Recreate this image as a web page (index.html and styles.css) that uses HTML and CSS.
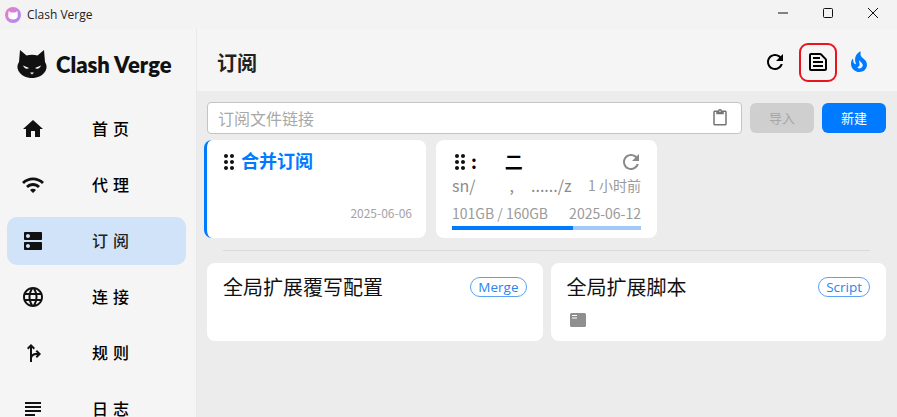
FILE: index.html
```html
<!DOCTYPE html>
<html lang="zh-CN">
<head>
    <meta charset="UTF-8">
    <title>Clash Verge</title>
    <link rel="stylesheet" href="styles.css">
</head>
<body>
<div class="titlebar">
    <svg class="app-icon" viewBox="0 0 16 16">
        <defs>
            <linearGradient id="appgrad" x1="0" y1="0" x2="1" y2="1">
                <stop offset="0" stop-color="#f07cc0"/>
                <stop offset="1" stop-color="#a78bff"/>
            </linearGradient>
        </defs>
        <circle cx="8" cy="8" r="8" fill="url(#appgrad)"/>
        <path d="M3.6 4l2.2 1.5h4.4L12.4 4l.4 5c0 2.200-2.200 3.600-4.800 3.600S3.200 11.200 3.200 9z" fill="#fff"/>
    </svg>
    <span class="app-name">Clash Verge</span>
    <div class="win-btns">
        <svg viewBox="0 0 10 10"><path d="M0 5h10"/></svg>
        <svg viewBox="0 0 10 10"><rect x=".5" y=".5" width="9" height="9" rx="1"/></svg>
        <svg viewBox="0 0 10 10"><path d="M0 0l10 10M10 0L0 10"/></svg>
    </div>
</div>
<div class="app">
    <div class="sidebar">
        <div class="logo">
            <svg class="cat" viewBox="0 0 30 28">
                <path d="M3 0l6.500 5.500c3.500-1 7.500-1 11 0L27 0l1 12c2 3 2 6 .5 9-2.500 4.500-8 7-13.500 7S4 25.500 1.500 21C0 18 0 15 2 12z" fill="#111"/>
                <path d="M6 15.500l6 2.500c-2 1.500-5 .5-6-2.500zM24 15.500L18 18c2 1.500 5 .5 6-2.500z" fill="#fff"/>
                <path d="M13 22.500h4L15 24.500z" fill="#fff"/>
            </svg>
            <span class="logo-text">Clash Verge</span>
        </div>
        <ul class="nav">
            <li class="nav-item">
                <svg viewBox="0 0 24 24"><path d="M10 20v-6h4v6h5v-8h3L12 3 2 12h3v8z"/></svg>
                <span>首页</span>
            </li>
            <li class="nav-item">
                <svg viewBox="0 0 24 24"><path d="M1 9l2 2c4.970-4.970 13.030-4.970 18 0l2-2C16.930 2.930 7.080 2.930 1 9zm8 8l3 3 3-3c-1.650-1.660-4.340-1.660-6 0zm-4-4l2 2c2.760-2.760 7.240-2.760 10 0l2-2C15.140 9.140 8.870 9.140 5 13z"/></svg>
                <span>代理</span>
            </li>
            <li class="nav-item active">
                <svg viewBox="0 0 24 24"><path d="M20 13H4c-.55 0-1 .45-1 1v6c0 .55.45 1 1 1h16c.55 0 1-.45 1-1v-6c0-.55-.45-1-1-1zM7 19c-1.100 0-2-.9-2-2s.9-2 2-2 2 .9 2 2-.9 2-2 2zM20 3H4c-.55 0-1 .45-1 1v6c0 .55.45 1 1 1h16c.55 0 1-.45 1-1V4c0-.55-.45-1-1-1zM7 9c-1.100 0-2-.9-2-2s.9-2 2-2 2 .9 2 2-.9 2-2 2z"/></svg>
                <span>订阅</span>
            </li>
            <li class="nav-item">
                <svg viewBox="0 0 24 24"><path d="M11.990 2C6.470 2 2 6.480 2 12s4.470 10 9.990 10C17.520 22 22 17.520 22 12S17.520 2 11.990 2zm6.930 6h-2.950c-.32-1.250-.78-2.450-1.380-3.560 1.840.63 3.370 1.910 4.330 3.560zM12 4.040c.83 1.200 1.480 2.530 1.910 3.960h-3.820c.43-1.430 1.080-2.760 1.910-3.960zM4.260 14C4.100 13.360 4 12.690 4 12s.1-1.360.26-2h3.380c-.08.66-.14 1.320-.14 2s.06 1.340.14 2H4.260zm.82 2h2.950c.32 1.250.78 2.450 1.380 3.560-1.840-.63-3.370-1.900-4.330-3.560zm2.950-8H5.080c.96-1.660 2.490-2.930 4.330-3.560C8.810 5.550 8.350 6.750 8.030 8zM12 19.960c-.83-1.200-1.480-2.530-1.910-3.960h3.820c-.43 1.430-1.080 2.760-1.910 3.960zM14.340 14H9.660c-.09-.66-.16-1.320-.16-2s.07-1.350.16-2h4.680c.09.65.16 1.320.16 2s-.07 1.340-.16 2zm.25 5.560c.6-1.110 1.060-2.310 1.380-3.560h2.950c-.96 1.650-2.490 2.930-4.330 3.560zM16.360 14c.08-.66.14-1.320.14-2s-.06-1.340-.14-2h3.380c.16.64.26 1.310.26 2s-.1 1.360-.26 2h-3.380z"/></svg>
                <span>连接</span>
            </li>
            <li class="nav-item">
                <svg viewBox="0 0 24 24"><path d="M14.590 15.590 16 17l4-4-4-4-1.410 1.410L16.170 12c-1.510-.33-3.730.08-5.170 1.360V6.830l1.590 1.590L14 7l-4-4-4 4 1.410 1.410L9 6.830V21h2v-4c.73-2.580 3.070-3.470 5.170-3l-1.580 1.590z"/></svg>
                <span>规则</span>
            </li>
            <li class="nav-item">
                <svg viewBox="0 0 24 24"><path d="M14 17H4v2h10v-2zm6-8H4v2h16V9zM4 15h16v-2H4v2zM4 5v2h16V5H4z"/></svg>
                <span>日志</span>
            </li>
        </ul>
    </div>
    <div class="main">
        <div class="header">
            <h1 class="page-title">订阅</h1>
            <div class="header-btns">
                <button class="icon-btn">
                    <svg viewBox="0 0 24 24"><path d="M17.650 6.350C16.200 4.900 14.210 4 12 4c-4.420 0-7.990 3.580-7.990 8s3.570 8 7.990 8c3.730 0 6.840-2.550 7.730-6h-2.080c-.82 2.330-3.040 4-5.650 4-3.310 0-6-2.690-6-6s2.690-6 6-6c1.660 0 3.140.69 4.220 1.780L13 11h7V4l-2.350 2.350z"/></svg>
                </button>
                <button class="icon-btn marked">
                    <svg viewBox="0 0 24 24"><path d="M14.170 5 19 9.830V19H5V5h9.170zm0-2H5c-1.100 0-2 .9-2 2v14c0 1.100.9 2 2 2h14c1.100 0 2-.9 2-2V9.830c0-.53-.21-1.040-.59-1.410l-4.830-4.830c-.37-.38-.88-.59-1.410-.59zM7 15h10v2H7v-2zm0-4h10v2H7v-2zm0-4h7v2H7V7z"/></svg>
                </button>
                <button class="icon-btn fire">
                    <svg viewBox="0 0 24 24"><path d="M19.480 12.350c-1.570-4.080-7.160-4.300-5.810-10.230.1-.44-.37-.78-.75-.55C9.290 3.710 6.680 8 8.870 13.620c.18.46-.36.89-.75.59-1.810-1.370-2-3.340-1.840-4.750.06-.52-.62-.77-.91-.34C4.690 10.160 4 11.840 4 14.370c.38 5.600 5.110 7.320 6.810 7.540 2.430.31 5.060-.14 6.950-1.870 2.080-1.930 2.840-5.010 1.720-7.690zm-9.280 5.030c1.440-.35 2.180-1.390 2.380-2.310.33-1.430-.96-2.830-.09-5.090.33 1.870 3.270 3.040 3.270 5.080.08 2.530-2.660 4.700-5.560 2.320z"/></svg>
                </button>
            </div>
        </div>
        <div class="content">
            <div class="toolbar">
                <div class="url-input">
                    <span>订阅文件链接</span>
                    <svg viewBox="0 0 24 24"><path d="M19 2h-4.180C14.400.84 13.300 0 12 0c-1.300 0-2.400.84-2.820 2H5c-1.100 0-2 .9-2 2v16c0 1.100.9 2 2 2h14c1.100 0 2-.9 2-2V4c0-1.100-.9-2-2-2zm-7 0c.55 0 1 .45 1 1s-.45 1-1 1-1-.45-1-1 .45-1 1-1zm7 18H5V4h2v3h10V4h2v16z"/></svg>
                </div>
                <button class="btn disabled">导入</button>
                <button class="btn primary">新建</button>
            </div>
            <div class="profiles">
                <div class="card selected">
                    <div class="card-title">
                        <svg class="drag" viewBox="0 0 24 24"><path d="M11 18c0 1.100-.9 2-2 2s-2-.9-2-2 .9-2 2-2 2 .9 2 2zm-2-8c-1.100 0-2 .9-2 2s.9 2 2 2 2-.9 2-2-.9-2-2-2zm0-6c-1.100 0-2 .9-2 2s.9 2 2 2 2-.9 2-2-.9-2-2-2zm6 4c1.100 0 2-.9 2-2s-.9-2-2-2-2 .9-2 2 .9 2 2 2zm0 2c-1.100 0-2 .9-2 2s.9 2 2 2 2-.9 2-2-.9-2-2-2zm0 6c-1.100 0-2 .9-2 2s.9 2 2 2 2-.9 2-2-.9-2-2-2z"/></svg>
                        <span class="name">合并订阅</span>
                    </div>
                    <div class="card-date">2025-06-06</div>
                </div>
                <div class="card">
                    <div class="card-title">
                        <svg class="drag" viewBox="0 0 24 24"><path d="M11 18c0 1.100-.9 2-2 2s-2-.9-2-2 .9-2 2-2 2 .9 2 2zm-2-8c-1.100 0-2 .9-2 2s.9 2 2 2 2-.9 2-2-.9-2-2-2zm0-6c-1.100 0-2 .9-2 2s.9 2 2 2 2-.9 2-2-.9-2-2-2zm6 4c1.100 0 2-.9 2-2s-.9-2-2-2-2 .9-2 2 .9 2 2 2zm0 2c-1.100 0-2 .9-2 2s.9 2 2 2 2-.9 2-2-.9-2-2-2zm0 6c-1.100 0-2 .9-2 2s.9 2 2 2 2-.9 2-2-.9-2-2-2z"/></svg>
                        <span class="masked-name"><span>:</span><span>二</span></span>
                        <svg class="card-refresh" viewBox="0 0 24 24"><path d="M17.650 6.350C16.200 4.900 14.210 4 12 4c-4.420 0-7.990 3.580-7.990 8s3.570 8 7.990 8c3.730 0 6.840-2.550 7.730-6h-2.080c-.82 2.330-3.040 4-5.650 4-3.310 0-6-2.690-6-6s2.690-6 6-6c1.660 0 3.140.69 4.220 1.780L13 11h7V4l-2.350 2.350z"/></svg>
                    </div>
                    <div class="card-row url-row">
                        <span class="masked-url"><span>sn/</span><span>,</span><span>....../z</span></span>
                        <span>1 小时前</span>
                    </div>
                    <div class="card-row usage-row">
                        <span>101GB / 160GB</span>
                        <span>2025-06-12</span>
                    </div>
                    <div class="bar"><div class="bar-fill" style="width:64%"></div></div>
                </div>
            </div>
            <div class="divider"></div>
            <div class="globals">
                <div class="global-card">
                    <div class="global-head">
                        <span class="global-title">全局扩展覆写配置</span>
                        <span class="tag">Merge</span>
                    </div>
                </div>
                <div class="global-card">
                    <div class="global-head">
                        <span class="global-title">全局扩展脚本</span>
                        <span class="tag">Script</span>
                    </div>
                    <svg class="script-icon" viewBox="0 0 16 14">
                        <rect width="16" height="14" rx="1.500" fill="#8f8f92"/>
                        <path d="M2 2.500h5M2 5h5" stroke="#fff" stroke-width="1"/>
                    </svg>
                </div>
            </div>
        </div>
    </div>
</div>
</body>
</html>
```

FILE: styles.css
```css
*{box-sizing: border-box;}
html,body{margin: 0;height: 100%;overflow: hidden;}
body{
    background: #f5f5f5;
    color: #000;
    font-family: "Noto Sans CJK SC", "Open Sans", sans-serif;
}
svg{display: block;fill: currentColor;}

/* title bar */
.titlebar{
    height: 29px;
    background: #f3f3f3;
    display: flex;
    align-items: center;
    padding-left: 5px;
}
.app-icon{width: 16px;height: 16px;}
.app-name{
    margin-left: 6px;
    font-family: "Open Sans", sans-serif;
    font-size: 12px;
    color: #222;
}
.win-btns{margin-left: auto;display: flex;gap: 35px;padding-right: 19px;}
.win-btns svg{
    width: 10px;
    height: 10px;
    margin-bottom: 3px;
    fill: none;
    stroke: #111;
    stroke-width: 1;
    overflow: visible;
}

.app{display: flex;height: 388px;}

/* sidebar */
.sidebar{
    width: 197px;
    flex-shrink: 0;
    border-right: 1px solid #e8e8e8;
    overflow: hidden;
}
.logo{
    display: flex;
    align-items: center;
    padding: 0 0 6px 17px;
    height: 76px;
}
.cat{width: 30px;height: 28px;}
.logo-text{
    margin-left: 9px;
    font-family: Lato, sans-serif;
    font-weight: 800;
    font-size: 22px;
    color: #111;
}
.nav{list-style: none;margin: 0;padding: 0 10px 0 7px;}
.nav-item{
    height: 48px;
    margin-bottom: 8px;
    border-radius: 10px;
    display: flex;
    align-items: center;
    padding-left: 14px;
    font-size: 16px;
    font-weight: 500;
    letter-spacing: 5px;
}
.nav-item svg{width: 24px;height: 24px;margin-right: 47px;color: #111;}
.nav-item span{margin-bottom: 2px;}
.nav-item.active{background: #d0e3f8;}
.nav-item.active span{color: #222;}

/* main */
.main{flex: 1;min-width: 0;background: #ececec;}
.header{
    height: 62px;
    background: #f5f5f5;
    display: flex;
    align-items: center;
    padding: 4px 19px 0 20px;
}
.page-title{margin: 0;font-size: 20px;font-weight: 700;color: #222;}
.header-btns{margin-left: auto;display: flex;align-items: center;}
.icon-btn{
    width: 38px;
    height: 39px;
    padding: 0;
    border: 2px solid transparent;
    border-radius: 9px;
    background: none;
    display: flex;
    align-items: center;
    justify-content: center;
    color: #000;
}
.icon-btn svg{width: 24px;height: 24px;flex-shrink: 0;}
.icon-btn + .icon-btn{margin-left: 5px;}
.icon-btn.marked{border-color: #e8141e;}
.icon-btn.fire{margin-left: 3px;color: #007bff;}

.content{padding: 11px 11px 0 10px;}
.toolbar{display: flex;align-items: center;height: 32px;}
.url-input{
    flex: 1;
    height: 32px;
    background: #fff;
    border: 1px solid #c4c4c4;
    border-radius: 4px;
    display: flex;
    align-items: center;
    justify-content: space-between;
    padding: 0 12px 0 10px;
    font-size: 16px;
    color: #a8a8a8;
}
.url-input svg{width: 18px;height: 18px;color: #757575;}
.btn{
    width: 64px;
    height: 30px;
    margin-left: 8px;
    padding: 0 0 2px;
    border: 0;
    border-radius: 6px;
    font-family: inherit;
    font-size: 13px;
}
.btn.disabled{background: #cfcfcf;color: #a6a6a6;}
.btn.primary{background: #007bff;color: #fff;}

/* profile cards */
.profiles{display: flex;gap: 10px;margin: 6px 0 0 -3px;}
.card{
    width: 221px;
    height: 98px;
    background: #fff;
    border-radius: 8px;
    padding: 9px 16px 0;
    position: relative;
}
.card.selected{width: 222px;border-left: 3px solid #007bff;padding-left: 14px;}
.card-title{display: flex;align-items: center;height: 25px;}
.drag{width: 24px;height: 24px;margin-left: -4px;flex-shrink: 0;color: #111;}
.name{margin: -4px 0 0;font-size: 18px;font-weight: 700;color: #007bff;}
.masked-name{
    display: flex;
    margin: -2px 0 0 -1px;
    font-size: 18px;
    font-weight: 700;
    gap: 28px;
}
.card-refresh{width: 24px;height: 24px;margin: 0 -2px 0 auto;color: #8a8a8a;}
.card-date{
    position: absolute;
    right: 14px;
    bottom: 17px;
    font-size: 12px;
    color: #a3a3a3;
}
.card-row{
    display: flex;
    justify-content: space-between;
    font-size: 14px;
    color: #9a9a9a;
}
.url-row{height: 23px;align-items: center;margin-top: -1px;}
.masked-url{display: flex;font-size: 16px;color: #8c8c8c;}
.masked-url span + span{margin-left: 34px;}
.masked-url span:last-child{margin-left: 17px;}
.usage-row{height: 21px;align-items: center;margin-top: 6px;}
.bar{height: 4px;background: #a0cbf9;margin-top: 3px;}
.bar-fill{height: 4px;background: #007bff;}

.divider{height: 1px;background: #d9d9d9;margin: 12px 16px 12px 16px;}

/* global cards */
.globals{display: flex;gap: 8px;}
.global-card{
    flex: 1;
    height: 78px;
    background: #fff;
    border-radius: 8px;
    padding: 11px 16px 0;
}
.global-head{display: flex;justify-content: space-between;align-items: center;}
.global-title{font-size: 20px;color: #111;line-height: 26px;}
.tag{
    border: 1px solid #5aa2f5;
    border-radius: 10px;
    height: 20px;
    line-height: 18px;
    padding: 0 7px;
    font-family: "Open Sans", sans-serif;
    font-size: 13.5px;
    color: #2a84f0;
}
.script-icon{width: 16px;height: 14px;margin: 13px 0 0 3px;}
```
